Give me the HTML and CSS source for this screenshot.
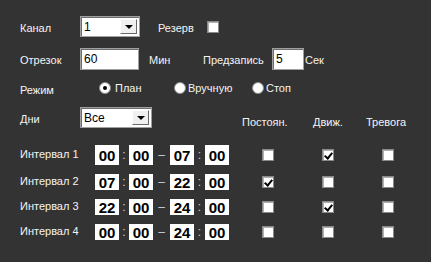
FILE: index.html
```html
<!DOCTYPE html>
<html lang="ru">
<head>
    <meta charset="UTF-8">
    <title>Расписание записи</title>
    <link rel="stylesheet" href="styles.css">
</head>
<body>
    <div class="panel">
        <div class="row r-channel">
            <span class="lbl w60">Канал</span>
            <div class="select w60"><span class="val">1</span><span class="drop"><i></i></span></div>
            <span class="lbl reserve">Резерв</span>
            <span class="check"></span>
        </div>

        <div class="row r-segment">
            <span class="lbl w60">Отрезок</span>
            <div class="input w59">60</div>
            <span class="lbl unit-min">Мин</span>
            <span class="lbl pre">Предзапись</span>
            <div class="input w32">5</div>
            <span class="lbl unit-sec">Сек</span>
        </div>

        <div class="row r-mode">
            <span class="lbl w79">Режим</span>
            <span class="opt o1"><span class="radio on"></span>План</span>
            <span class="opt o2"><span class="radio"></span>Вручную</span>
            <span class="opt"><span class="radio"></span>Стоп</span>
        </div>

        <div class="row r-days">
            <span class="lbl w60">Дни</span>
            <div class="select w72"><span class="val">Все</span><span class="drop"><i></i></span></div>
            <span class="head h1">Постоян.</span>
            <span class="head h2">Движ.</span>
            <span class="head">Тревога</span>
        </div>

        <div class="row interval first">
            <span class="lbl w75">Интервал 1</span>
            <span class="box">00</span><span class="sep colon">:</span><span class="box">00</span><span class="sep dash">–</span><span class="box">07</span><span class="sep colon2">:</span><span class="box">00</span>
            <span class="check c1"></span><span class="check c2 ticked"></span><span class="check c3"></span>
        </div>
        <div class="row interval">
            <span class="lbl w75">Интервал 2</span>
            <span class="box">07</span><span class="sep colon">:</span><span class="box">00</span><span class="sep dash">–</span><span class="box">22</span><span class="sep colon2">:</span><span class="box">00</span>
            <span class="check c1 ticked"></span><span class="check c2"></span><span class="check c3"></span>
        </div>
        <div class="row interval">
            <span class="lbl w75">Интервал 3</span>
            <span class="box">22</span><span class="sep colon">:</span><span class="box">00</span><span class="sep dash">–</span><span class="box">24</span><span class="sep colon2">:</span><span class="box">00</span>
            <span class="check c1"></span><span class="check c2 ticked"></span><span class="check c3"></span>
        </div>
        <div class="row interval">
            <span class="lbl w75">Интервал 4</span>
            <span class="box">00</span><span class="sep colon">:</span><span class="box">00</span><span class="sep dash">–</span><span class="box">24</span><span class="sep colon2">:</span><span class="box">00</span>
            <span class="check c1"></span><span class="check c2"></span><span class="check c3"></span>
        </div>
    </div>
</body>
</html>
```

FILE: styles.css
```css
html, body {
    margin: 0;
    background: #333333;
}
.panel {
    width: 431px;
    height: 262px;
    padding: 16px 0 0 20px;
    box-sizing: border-box;
    font-family: "Liberation Sans", Arial, sans-serif;
    font-size: 11px;
    color: #f4f4f4;
}
.row {
    display: flex;
    align-items: center;
}
.lbl { white-space: nowrap; padding-top: 3px; }
.w60 { width: 60px; flex: none; }
.w75 { width: 75px; flex: none; }
.w79 { width: 79px; flex: none; }

.r-channel { height: 21px; }
.r-segment { height: 21px; margin-top: 11px; }
.r-mode { height: 12px; margin-top: 13px; }
.r-days { height: 21px; margin-top: 13px; }

/* select / input */
.select, .input {
    box-sizing: border-box;
    height: 21px;
    background: #fff;
    border: 1px solid #a0a0a0;
    box-shadow: inset 1px 1px 0 #6d6d6d;
    color: #000;
    font-size: 12px;
    flex: none;
}
.select {
    display: flex;
    align-items: center;
    justify-content: space-between;
    padding: 0 2px 0 3px;
}
.w60.select { width: 60px; }
.w72 { width: 72px; }
.w59 { width: 59px; }
.w32 { width: 32px; }
.input {
    padding: 3px 0 0 3px;
    font-size: 12px;
}
.r-segment .input { height: 22px; }
.drop {
    width: 17px;
    height: 15px;
    box-sizing: border-box;
    background: #f0f0f0;
    border-top: 1px solid #fff;
    border-left: 1px solid #fff;
    border-right: 1px solid #696969;
    border-bottom: 1px solid #696969;
    display: flex;
    align-items: center;
    justify-content: center;
}
.drop i {
    width: 0;
    height: 0;
    border-left: 4px solid transparent;
    border-right: 4px solid transparent;
    border-top: 4px solid #000;
    margin-top: 1px;
}
.reserve { margin-left: 18px; width: 49px; }
.unit-min { margin-left: 10px; width: 54px; }
.pre { width: 69px; }
.unit-sec { margin-left: 1px; }

/* radios */
.opt {
    display: flex;
    align-items: center;
    white-space: nowrap;
}
.opt .radio { margin-right: 4px; }
.o1 { width: 75px; }
.o2 { width: 78px; }
.o2 .radio, .opt:last-child .radio { margin-right: 2px; }
.radio {
    width: 12px;
    height: 12px;
    box-sizing: border-box;
    border-radius: 50%;
    background: #fff;
    border: 1px solid #8c8c8c;
    display: flex;
    align-items: center;
    justify-content: center;
    flex: none;
}
.radio.on::after {
    content: "";
    width: 4px;
    height: 4px;
    border-radius: 50%;
    background: #000;
}

/* column heads */
.head { padding-top: 9px; white-space: nowrap; }
.h1 { margin-left: 90px; width: 71px; }
.h2 { width: 53px; }

/* intervals */
.interval { height: 16px; margin-top: 9px; }
.interval.first { height: 20px; margin-top: 17px; }
.interval .lbl { padding-top: 0; margin-top: -2px; }
.box {
    width: 24px;
    height: 100%;
    background: #fff;
    color: #000;
    font-weight: bold;
    font-size: 15px;
    display: flex;
    align-items: center;
    justify-content: center;
    flex: none;
}
.sep {
    color: #c8d0dc;
    text-align: center;
    flex: none;
    font-size: 12px;
}
.colon { width: 10px; }
.colon2 { width: 11px; }
.dash { width: 17px; }

/* checkboxes */
.check {
    width: 12px;
    height: 12px;
    box-sizing: border-box;
    background: #fff;
    border: 1px solid #8a8a8a;
    box-shadow: inset 1px 1px 0 #b0b0b0;
    flex: none;
    position: relative;
}
.r-channel .check { margin-top: 1px; }
.c1 { margin-left: 33px; }
.c2, .c3 { margin-left: 48px; }
.ticked::after {
    content: "";
    position: absolute;
    left: 3px;
    top: 1px;
    width: 3px;
    height: 6px;
    border-right: 2px solid #000;
    border-bottom: 2px solid #000;
    transform: rotate(40deg);
}
```
